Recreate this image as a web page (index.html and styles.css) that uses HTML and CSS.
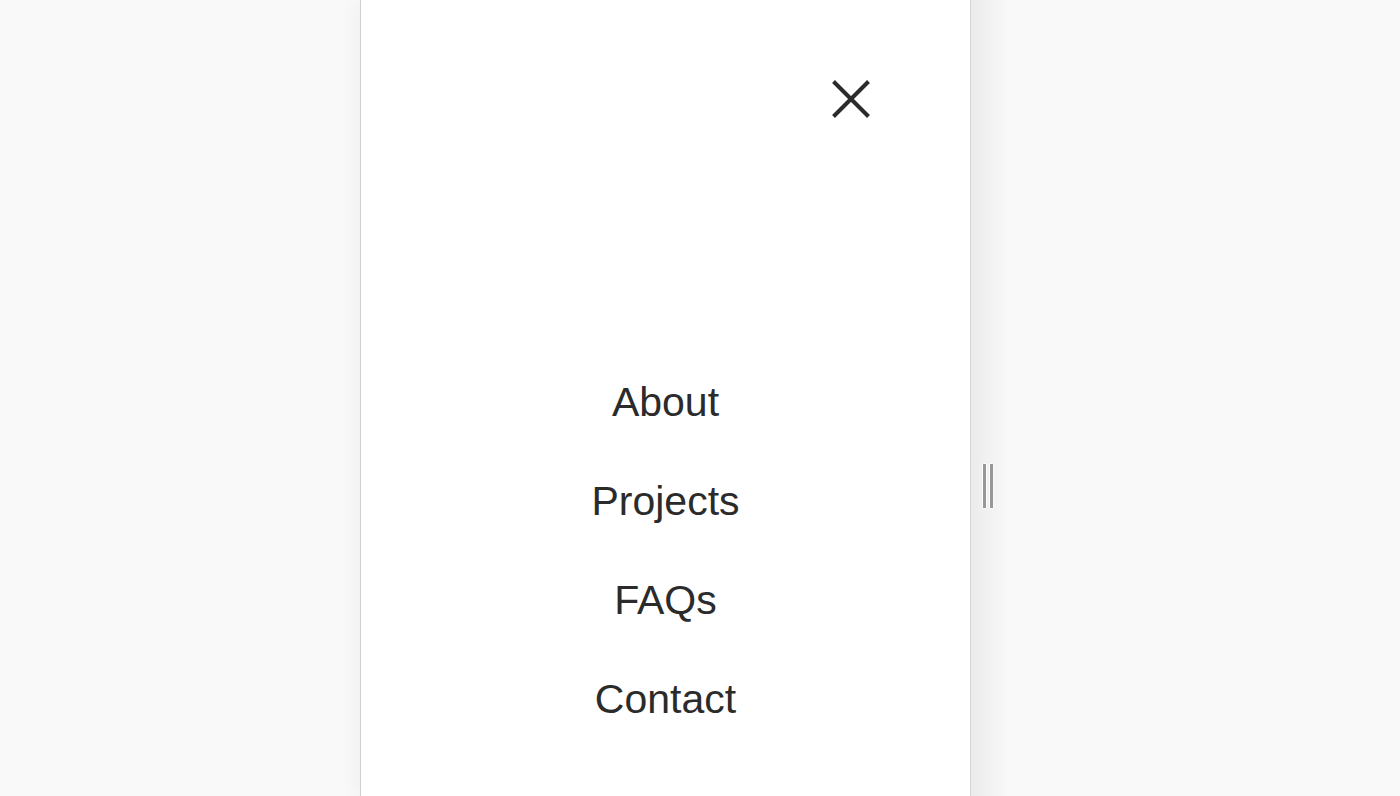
FILE: index.html
```html
<!DOCTYPE html>
<html lang="en">
<head>
<meta charset="utf-8">
<title>Menu</title>
<link rel="stylesheet" href="styles.css">
</head>
<body>
<div class="stage">
  <div class="panel">
    <div class="panel-head">
      <button class="close" aria-label="Close menu">
        <svg width="40" height="40" viewBox="0 0 40 40"><path d="M2.5 2.5 L37.5 37.5 M37.5 2.5 L2.5 37.5" stroke="#2b2b2b" stroke-width="4" fill="none"/></svg>
      </button>
    </div>
    <nav class="menu">
      <a href="#">About</a>
      <a href="#">Projects</a>
      <a href="#">FAQs</a>
      <a href="#">Contact</a>
    </nav>
  </div>
  <div class="resizer">
    <span class="grip"></span>
    <span class="grip"></span>
  </div>
</div>
</body>
</html>
```

FILE: styles.css
```css
html, body {
  margin: 0;
  padding: 0;
  height: 100%;
}
body {
  background: #f9f9f9;
  font-family: "Liberation Sans", Arial, Helvetica, sans-serif;
  overflow: hidden;
}
.stage {
  display: flex;
  height: 796px;
  padding-left: 360px;
}
.panel {
  width: 609px;
  background: #fff;
  border-left: 1px solid #cfcfcf;
  border-right: 1px solid #d6d6d6;
  box-shadow: -6px 0 16px rgba(0, 0, 0, 0.035);
  display: flex;
  flex-direction: column;
}
.panel-head {
  display: flex;
  justify-content: flex-end;
  padding: 79px 99px 0 0;
  height: 274px;
  box-sizing: border-box;
}
.panel-head {
  height: 274px;
}
.close {
  width: 40px;
  height: 40px;
  padding: 0;
  margin: 0;
  border: 0;
  background: none;
  cursor: pointer;
}
.close svg {
  display: block;
}
.menu {
  display: flex;
  flex-direction: column;
  align-items: center;
  margin-top: 79px;
}
.menu a {
  display: block;
  font-size: 41px;
  line-height: 99px;
  color: #2b2b2b;
  text-decoration: none;
}
.resizer {
  width: 34px;
  background: linear-gradient(to right, #ebebeb 0%, #f0f0f0 40%, #f7f7f7 100%);
  display: flex;
  justify-content: center;
  align-items: flex-start;
  gap: 2px;
  padding: 463px 1px 0 0;
  box-sizing: border-box;
}
.grip {
  display: block;
  width: 3px;
  height: 44px;
  background: #979797;
  border: 1px solid #fbfbfb;
  border-radius: 1px;
}
```
